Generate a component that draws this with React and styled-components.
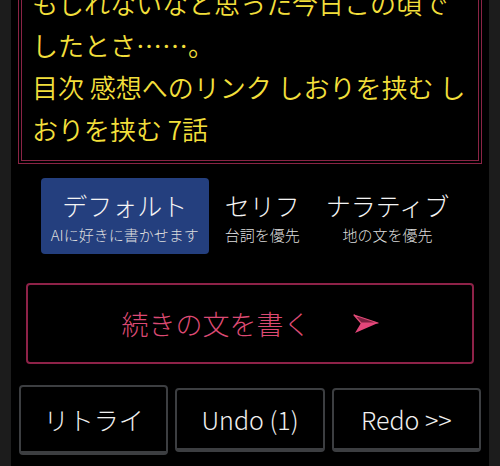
import React, { useState } from 'react';
import styled, { createGlobalStyle } from 'styled-components';

const GlobalStyle = createGlobalStyle`
  html, body {
    margin: 0;
    padding: 0;
    background: #1c1c1c;
  }
  body {
    font-family: "Noto Sans CJK JP", "Noto Sans", sans-serif;
    font-weight: 300;
  }
`;

const Screen = styled.div`
  height: 466px;
  display: flex;
  justify-content: center;
  overflow: hidden;
`;

const Panel = styled.div`
  width: 478px;
  height: 100%;
  box-sizing: border-box;
  background: #000;
  display: flex;
  flex-direction: column;
  justify-content: flex-end;
  padding: 0 7px 11px;
  overflow: hidden;
`;

const StoryBox = styled.div`
  flex-shrink: 0;
  border: 4px double #8a2445;
  padding: 10px 10px;
  color: #f2df3b;
  font-size: 26px;
  font-weight: 350;
  line-height: 42px;
  white-space: pre-wrap;
  word-break: break-all;
`;

const ModeRow = styled.div`
  flex-shrink: 0;
  display: flex;
  justify-content: center;
  gap: 6px;
  margin-top: 14px;
`;

const ModeItem = styled.button`
  display: flex;
  flex-direction: column;
  align-items: center;
  padding: 10px 10px 8px;
  border: none;
  border-radius: 4px;
  background: ${(props) => (props.$active ? '#243f7e' : 'transparent')};
  color: #f4f4f4;
  font-family: inherit;
  font-weight: inherit;
  cursor: pointer;
`;

const ModeTitle = styled.span`
  font-size: 25px;
  line-height: 34px;
  white-space: nowrap;
`;

const ModeSub = styled.span`
  margin-top: 2px;
  font-size: 15px;
  line-height: 22px;
  color: #dedede;
  white-space: nowrap;
`;

const WriteButton = styled.button`
  flex-shrink: 0;
  margin: 29px 8px 0;
  height: 81px;
  display: flex;
  align-items: center;
  justify-content: center;
  gap: 42px;
  background: #000;
  border: 2.5px solid #8e2248;
  border-radius: 4px;
  color: #dc4a73;
  font-family: inherit;
  font-weight: inherit;
  font-size: 27px;
  cursor: pointer;
`;

const ActionRow = styled.div`
  flex-shrink: 0;
  display: grid;
  grid-template-columns: repeat(3, 1fr);
  align-items: center;
  gap: 7px;
  margin: 21px 1px 0;
`;

const ActionButton = styled.button`
  height: ${(props) => (props.$raised ? '70px' : '64px')};
  background: #000;
  border: 2px solid #3c3e41;
  border-bottom-width: 4px;
  border-radius: 4px;
  color: #f0f0f0;
  font-family: inherit;
  font-weight: inherit;
  font-size: 25px;
  cursor: pointer;
`;

const Arrow = () => (
  <svg width="26" height="20" viewBox="0 0 26 20">
    <polygon points="1,1 25,9 8,9" fill="#7d1f40" stroke="#e04a76" strokeWidth="1.2" strokeLinejoin="round" />
    <polygon points="8,9 25,9 2,19" fill="#e4467a" />
  </svg>
);

const story =
  '放課後の帰り道、夕焼けに染まる川沿いを二人でゆっくり歩いた。\n' +
  'こんな毎日がずっと続くのも悪くないか\n' +
  'もしれないなと思った今日この頃でしたとさ……。\n' +
  '目次 感想へのリンク しおりを挟む しおりを挟む 7話';

const modes = [
  { id: 'default', title: 'デフォルト', sub: 'AIに好きに書かせます' },
  { id: 'serif', title: 'セリフ', sub: '台詞を優先' },
  { id: 'narrative', title: 'ナラティブ', sub: '地の文を優先' },
];

const App = () => {
  const [mode, setMode] = useState('default');

  return (
    <Screen>
      <GlobalStyle />
      <Panel>
        <StoryBox>{story}</StoryBox>

        <ModeRow>
          {modes.map((m) => (
            <ModeItem key={m.id} $active={mode === m.id} onClick={() => setMode(m.id)}>
              <ModeTitle>{m.title}</ModeTitle>
              <ModeSub>{m.sub}</ModeSub>
            </ModeItem>
          ))}
        </ModeRow>

        <WriteButton>
          <span>続きの文を書く</span>
          <Arrow />
        </WriteButton>

        <ActionRow>
          <ActionButton $raised>リトライ</ActionButton>
          <ActionButton>Undo (1)</ActionButton>
          <ActionButton>Redo &gt;&gt;</ActionButton>
        </ActionRow>
      </Panel>
    </Screen>
  );
};

export default App;
